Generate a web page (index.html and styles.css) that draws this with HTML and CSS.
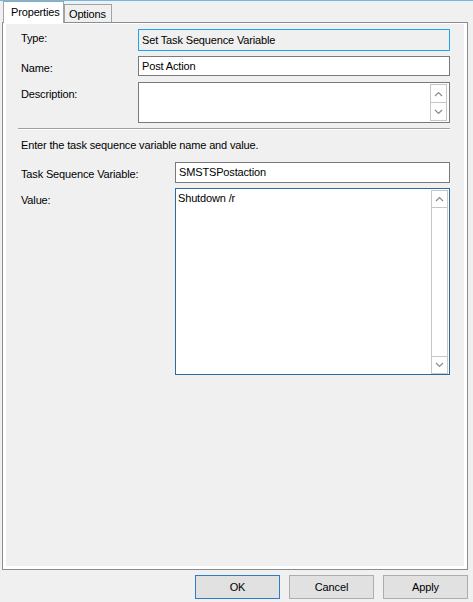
FILE: index.html
```html
<!DOCTYPE html>
<html>
<head>
<meta charset="utf-8">
<link rel="stylesheet" href="styles.css">
</head>
<body>
<div class="window">
  <div class="tabs">
    <div class="tab tab-active">Properties</div>
    <div class="tab">Options</div>
  </div>
  <div class="panel">
    <div class="page">
      <div class="row row-type">
        <div class="label label-type">Type:</div>
        <div class="field field-type">Set Task Sequence Variable</div>
      </div>
      <div class="row row-name">
        <div class="label">Name:</div>
        <div class="field field-name">Post Action</div>
      </div>
      <div class="row row-desc">
        <div class="label">Description:</div>
        <div class="field field-desc">
          <div class="area-text"></div>
          <div class="scrollbar sb-small">
            <div class="sb-btn">
              <svg width="9" height="6" viewBox="0 0 9 6"><path d="M1 5 L4.5 1.5 L8 5" fill="none" stroke="#8a8a8a" stroke-width="1.2"/></svg>
            </div>
            <div class="sb-track"></div>
            <div class="sb-btn sb-btn-down">
              <svg width="9" height="6" viewBox="0 0 9 6"><path d="M1 1 L4.5 4.5 L8 1" fill="none" stroke="#8a8a8a" stroke-width="1.2"/></svg>
            </div>
          </div>
        </div>
      </div>
      <div class="separator"></div>
      <div class="intro">Enter the task sequence variable name and value.</div>
      <div class="row row-tsv">
        <div class="label label-wide">Task Sequence Variable:</div>
        <div class="field field-tsv">SMSTSPostaction</div>
      </div>
      <div class="row row-value">
        <div class="label label-wide">Value:</div>
        <div class="field field-value">
          <div class="area-text value-text">Shutdown /r</div>
          <div class="scrollbar sb-large">
            <div class="sb-btn">
              <svg width="9" height="6" viewBox="0 0 9 6"><path d="M1 5 L4.5 1.5 L8 5" fill="none" stroke="#8a8a8a" stroke-width="1.2"/></svg>
            </div>
            <div class="sb-track"></div>
            <div class="sb-btn sb-btn-down">
              <svg width="9" height="6" viewBox="0 0 9 6"><path d="M1 1 L4.5 4.5 L8 1" fill="none" stroke="#8a8a8a" stroke-width="1.2"/></svg>
            </div>
          </div>
        </div>
      </div>
    </div>
  </div>
  <div class="buttons">
    <div class="btn btn-default">OK</div>
    <div class="btn">Cancel</div>
    <div class="btn">Apply</div>
  </div>
</div>
</body>
</html>
```
FILE: styles.css
```css
html, body {
  margin: 0;
  padding: 0;
  background: #f0f0f0;
}
body {
  font-family: "Liberation Sans", Arial, sans-serif;
  font-size: 11px;
  letter-spacing: -0.15px;
  color: #000;
  width: 473px;
  height: 602px;
  overflow: hidden;
}
.window {
  border-top: 1px solid #6cb8e6;
  height: 601px;
  box-sizing: border-box;
}
.tabs {
  display: flex;
  align-items: flex-end;
  height: 21px;
  padding-left: 3px;
}
.tab {
  box-sizing: border-box;
  height: 18px;
  border: 1px solid #a3a3a3;
  border-bottom: none;
  padding: 2px 5px 0 4px;
  background: #f0f0f0;
  line-height: 14px;
  white-space: nowrap;
}
.tab-active {
  height: 22px;
  margin-bottom: -1px;
  position: relative;
  z-index: 1;
  background: #fff;
  padding: 3px 0 0 7px;
  width: 61px;
}
.panel {
  margin-left: 2px;
  width: 466px;
  height: 548px;
  box-sizing: border-box;
  border: 1px solid #898c95;
  background: #fff;
  padding: 1px 3px 3px 3px;
}
.page {
  background: #f0f0f0;
  height: 100%;
  box-sizing: border-box;
  padding-top: 5px;
  padding-right: 14px;
}
.row {
  display: flex;
  align-items: flex-start;
}
.label {
  width: 117px;
  padding-left: 15px;
  flex: none;
  line-height: 13px;
  margin-top: 6px;
}
.label-type {
  margin-top: 3px;
}
.label-wide {
  width: 154px;
}
.field {
  flex: 1;
  box-sizing: border-box;
  background: #fff;
  border: 1px solid #7a7a7a;
  line-height: 13px;
  padding: 0 3px;
}
.field-type {
  height: 22px;
  background: #f0f0f0;
  border-color: #1ca3ec;
  padding-top: 4px;
}
.row-name {
  margin-top: 5px;
}
.field-name {
  height: 20px;
  padding-top: 3px;
}
.row-desc {
  margin-top: 6px;
}
.field-desc {
  height: 41px;
  display: flex;
  padding: 1px 2px 1px 0;
}
.area-text {
  flex: 1;
}
.scrollbar {
  width: 17px;
  box-sizing: border-box;
  border: 1px solid #c6c6c6;
  background: #fff;
  display: flex;
  flex-direction: column;
}
.sb-btn {
  height: 16px;
  flex: none;
  display: flex;
  align-items: center;
  justify-content: center;
  border-bottom: 1px solid #c6c6c6;
}
.sb-btn-down {
  border-bottom: none;
  border-top: 1px solid #c6c6c6;
}
.sb-track {
  flex: 1;
}
.sb-small .sb-track {
  flex: 0 0 0;
}
.sb-small .sb-btn {
  height: 17px;
}
.sb-small .sb-btn-down {
  border-top: none;
}
.separator {
  margin: 5px 0 0 12px;
  height: 1px;
  background: #a0a0a0;
  border-bottom: 1px solid #fff;
  width: 432px;
}
.intro {
  margin: 9px 0 0 15px;
  line-height: 13px;
}
.row-tsv {
  margin-top: 10px;
}
.field-tsv {
  height: 21px;
  padding-top: 3px;
}
.row-value {
  margin-top: 5px;
}
.field-value {
  height: 187px;
  display: flex;
  border-color: #2c6aa0;
  padding: 1px 1px 0 0;
}
.value-text {
  padding: 2px 0 0 2px;
}
.buttons {
  display: flex;
  justify-content: flex-end;
  gap: 9px;
  padding: 5px 5px 0 0;
}
.btn {
  width: 85px;
  height: 24px;
  box-sizing: border-box;
  border: 1px solid #adadad;
  background: #e1e1e1;
  display: flex;
  align-items: center;
  justify-content: center;
}
.btn-default {
  border-color: #2f7cc4;
}
```
